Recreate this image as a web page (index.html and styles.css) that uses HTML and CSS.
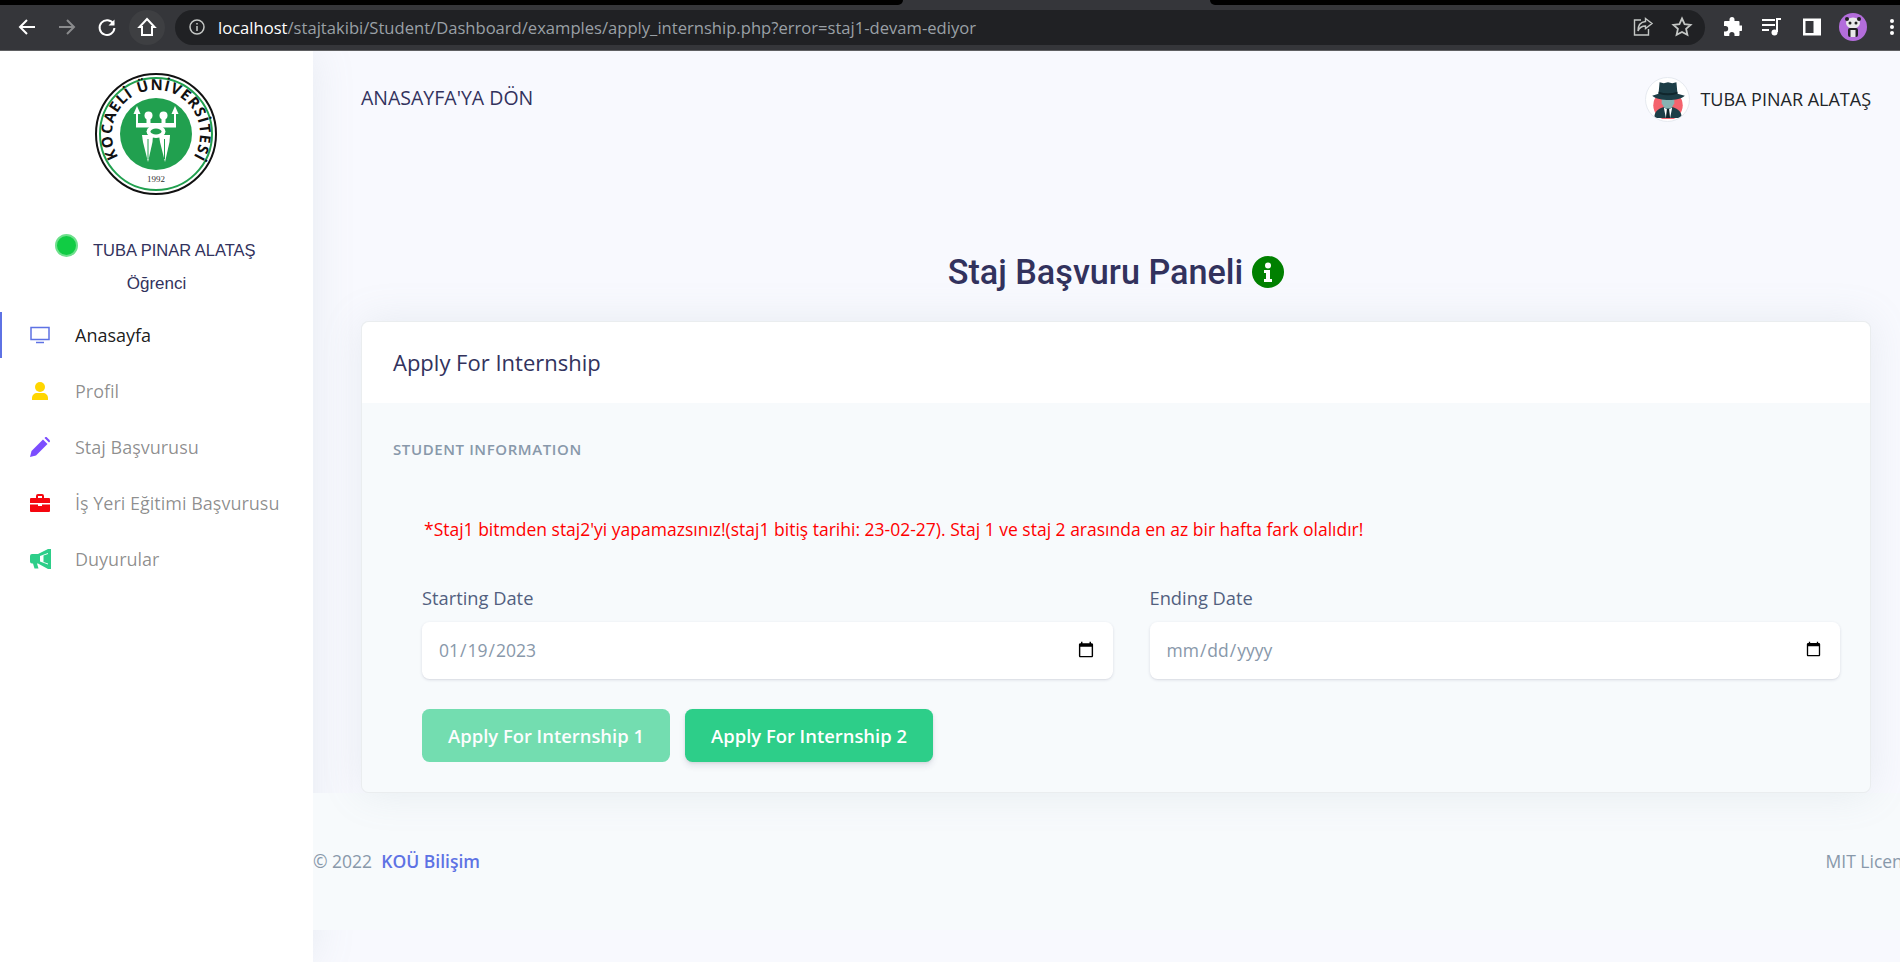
FILE: index.html
```html
<!DOCTYPE html>
<html lang="en">
<head>
    <meta charset="UTF-8">
    <meta name="viewport" content="width=device-width, initial-scale=1.0">
    <title>Staj Başvuru Paneli</title>
    <link rel="stylesheet" href="styles.css">
</head>
<body>
    <!-- browser chrome -->
    <div class="tab-strip">
        <div class="tab-black tab-left"></div>
        <div class="tab-active"></div>
        <div class="tab-black tab-right"></div>
    </div>
    <div class="toolbar">
        <div class="tool-btn">
            <svg width="22" height="22" viewBox="0 0 22 22" fill="none" stroke="#fff" stroke-width="2"><path d="M19 11H4M11 4l-7 7 7 7"/></svg>
        </div>
        <div class="tool-btn">
            <svg width="22" height="22" viewBox="0 0 22 22" fill="none" stroke="#8a8b8d" stroke-width="2"><path d="M3 11h15M11 4l7 7-7 7"/></svg>
        </div>
        <div class="tool-btn">
            <svg width="22" height="22" viewBox="0 0 22 22" fill="none" stroke="#fff" stroke-width="2"><path d="M17.500 8A7.400 7.400 0 1 0 18.400 12"/><path d="M18.500 3.500v6h-6z" fill="#fff" stroke="none"/></svg>
        </div>
        <div class="tool-btn tool-home">
            <svg width="22" height="22" viewBox="0 0 22 22" fill="none" stroke="#fff" stroke-width="2"><path d="M11 3l7.500 8H16v8H6v-8H3.500z"/></svg>
        </div>
        <div class="address-bar">
            <svg class="addr-info" width="18" height="18" viewBox="0 0 18 18" fill="none" stroke="#c4c7c5" stroke-width="1.500"><circle cx="9" cy="9" r="7"/><path d="M9 8v5M9 5v1.600"/></svg>
            <span class="url"><span class="url-host">localhost</span>/stajtakibi/Student/Dashboard/examples/apply_internship.php?error=staj1-devam-ediyor</span>
            <div class="addr-actions">
                <svg width="22" height="22" viewBox="0 0 22 22" fill="none" stroke="#c4c7c5" stroke-width="1.400"><path d="M9 4H2.500v15h14v-6"/><path d="M13.500 2.500l6.500 5-6.500 5V10c-4 0-6 1.500-7.500 5 0-5 2.500-9 7.500-9.500z"/></svg>
                <svg width="22" height="22" viewBox="0 0 22 22" fill="none" stroke="#c4c7c5" stroke-width="1.800"><path d="M11 2.500l2.600 5.600 6 .7-4.500 4.100 1.300 6L11 16l-5.400 2.900 1.300-6-4.500-4.100 6-.7z"/></svg>
            </div>
        </div>
        <div class="ext-icons">
            <svg width="20" height="20" viewBox="0 0 20 20" fill="#fff"><path d="M7.500 2.500a2.500 2.500 0 0 1 5 0V4h4a1 1 0 0 1 1 1v3.500H19a2.700 2.700 0 0 1 0 5.400h-1.500V18a1 1 0 0 1-1 1h-4v-1.500a2.600 2.600 0 0 0-5.200 0V19H3a1 1 0 0 1-1-1v-3.500h1.500a2.700 2.700 0 0 0 0-5.400H2V5a1 1 0 0 1 1-1h4.500z"/></svg>
            <svg width="20" height="20" viewBox="0 0 20 20" fill="none" stroke="#fff" stroke-width="2"><path d="M0 3h13M0 8h13M0 13h7"/><circle cx="12.500" cy="15.500" r="3" fill="#fff" stroke="none"/><path d="M15 15V2h4"/></svg>
            <svg width="20" height="20" viewBox="0 0 20 20"><rect x="1" y="1.500" width="18" height="17" fill="#fff"/><rect x="3.500" y="4" width="8" height="12" fill="#35363a"/></svg>
            <svg class="ext-profile" width="28" height="28" viewBox="0 0 28 28"><circle cx="14" cy="14" r="14" fill="#b36ddb"/><ellipse cx="14" cy="10" rx="7" ry="5.500" fill="#e9e9e9"/><circle cx="8" cy="6" r="2" fill="#222"/><circle cx="20" cy="6" r="2" fill="#222"/><circle cx="11" cy="10" r="1.500" fill="#222"/><circle cx="17" cy="10" r="1.500" fill="#222"/><rect x="9" y="15" width="10" height="9" rx="2" fill="#222"/><rect x="11.500" y="17" width="5" height="7" fill="#e9e9e9"/></svg>
            <svg class="ext-dots" width="6" height="18" viewBox="0 0 6 18" fill="#fff"><circle cx="3" cy="3" r="2"/><circle cx="3" cy="9" r="2"/><circle cx="3" cy="15" r="2"/></svg>
        </div>
    </div>
    <div class="page">
        <aside class="sidebar">
            <div class="logo-wrap">
                <svg class="logo" width="122" height="122" viewBox="0 0 122 122">
                    <defs>
                        <path id="logoArc" d="M23.500 84A44 44 0 1 1 98.500 84"/>
                    </defs>
                    <circle cx="61" cy="61" r="60" fill="#fff" stroke="#111" stroke-width="2"/>
                    <circle cx="61" cy="61" r="56" fill="none" stroke="#21a04f" stroke-width="2"/>
                    <text class="logo-text"><textPath href="#logoArc" startOffset="0" textLength="186" lengthAdjust="spacing">KOCAELİ ÜNİVERSİTESİ</textPath></text>
                    <circle cx="61" cy="61" r="36" fill="#21a04f"/>
                    <!-- emblem -->
                    <g fill="#fff">
                        <circle cx="53.500" cy="42.500" r="4"/>
                        <circle cx="68.500" cy="42.500" r="4"/>
                        <rect x="41" y="40" width="2" height="12"/>
                        <rect x="79" y="40" width="2" height="12"/>
                        <rect x="51.500" y="45" width="4" height="7"/>
                        <rect x="66.500" y="45" width="4" height="7"/>
                        <rect x="41" y="50" width="40" height="4.500"/>
                        <ellipse cx="61" cy="58.500" rx="9.500" ry="6.500"/>
                        <path d="M42 33l3.500 8h-7zM80 33l3.500 8h-7z"/>
                        <path d="M47 62h11l-.5 7-4.500 20-5-20z"/>
                        <path d="M64 62h11l-.5 7-4.500 20-5-20z"/>
                    </g>
                    <ellipse cx="61" cy="58.500" rx="5.500" ry="3" fill="#21a04f"/>
                    <path d="M53 66v20M69.500 66v20" stroke="#21a04f" stroke-width="1"/>
                    <text class="logo-year" x="61" y="109" text-anchor="middle">1992</text>
                </svg>
            </div>
            <div class="user-line">
                <span class="status-dot"></span>
                <span class="user-name">TUBA PINAR ALATAŞ</span>
            </div>
            <div class="user-role">Öğrenci</div>
            <ul class="nav-list">
                <li class="nav-item active">
                    <svg class="nav-icon" width="20" height="20" viewBox="0 0 20 20" fill="none" stroke="#5e72e4" stroke-width="1.500"><rect x="1" y="2.500" width="18" height="12"/><path d="M6 17.500h8"/></svg>
                    <span>Anasayfa</span>
                </li>
                <li class="nav-item">
                    <svg class="nav-icon" width="20" height="20" viewBox="0 0 20 20" fill="#ffd600"><circle cx="10" cy="6" r="5"/><path d="M2 19v-2c0-3 2.500-5 5-5h6c2.500 0 5 2 5 5v2z"/></svg>
                    <span>Profil</span>
                </li>
                <li class="nav-item">
                    <svg class="nav-icon" width="20" height="20" viewBox="0 0 20 20" fill="#7c4dff"><path d="M0 20l1.500-6L13 2.500l4.500 4.500L6 18.500z"/><path d="M14.500 1l1-1h1l3.500 3.500v1l-1 1z"/></svg>
                    <span>Staj Başvurusu</span>
                </li>
                <li class="nav-item">
                    <svg class="nav-icon" width="20" height="20" viewBox="0 0 20 20" fill="#f5060f"><path d="M6 5V3a2 2 0 0 1 2-2h4a2 2 0 0 1 2 2v2h-2V3H8v2z"/><path d="M1 5h18a1 1 0 0 1 1 1v4H0V6a1 1 0 0 1 1-1z"/><path d="M0 11.500h8V13h4v-1.500h8V18a1 1 0 0 1-1 1H1a1 1 0 0 1-1-1z"/></svg>
                    <span>İş Yeri Eğitimi Başvurusu</span>
                </li>
                <li class="nav-item">
                    <svg class="nav-icon nav-icon-wide" width="22" height="20" viewBox="0 0 22 20" fill="#2dce89"><path d="M0 7a2 2 0 0 1 2-2h6l10-5h3v20h-3L8 14.500H7l1.500 5H4.500L3 14.500H2a2 2 0 0 1-2-2z"/><path d="M18 4l-8 3v5.500l8 3z" fill="#fff"/><path d="M13.500 6.500l4.500-1.500v9.500l-4.500-1.500z"/></svg>
                    <span>Duyurular</span>
                </li>
            </ul>
        </aside>
        <main class="main">
            <nav class="topnav">
                <a class="back-link">ANASAYFA'YA DÖN</a>
                <div class="topnav-user">
                    <span class="avatar">
                        <svg width="40" height="40" viewBox="0 0 38 38">
                            <circle cx="19" cy="25" r="14" fill="#f4636d"/>
                            <path d="M6 37c0-7 5-10 13-11 8 1 13 4 13 11z" fill="#1d3e47"/>
                            <path d="M15 27l4 2 4-2-2 10h-4z" fill="#fff"/>
                            <path d="M18 28h2l1 9h-4z" fill="#10262c"/>
                            <path d="M13 16h12v7l-3 5h-6l-3-5z" fill="#86b3b3"/>
                            <path d="M11 3l4 1 4-1 4 1 4-1 1 11 7 2c-3 3-9 4-15 4S7 19 4 16l6-2z" fill="#1d3e47"/>
                            <path d="M10 12c6 2 12 2 18 0v2c-6 2-12 2-18 0z" fill="#10262c"/>
                        </svg>
                    </span>
                    <span class="topnav-name">TUBA PINAR ALATAŞ</span>
                </div>
            </nav>
            <section class="content">
                <h2 class="page-title">Staj Başvuru Paneli
                    <svg class="title-icon" width="32" height="32" viewBox="0 0 32 32"><circle cx="16" cy="16" r="16" fill="#008000"/><circle cx="16" cy="9.500" r="3" fill="#fff"/><path d="M12 14h6v9h2v3h-8v-3h2v-6h-2z" fill="#fff"/></svg>
                </h2>
                <div class="card">
                    <div class="card-header">Apply For Internship</div>
                    <form class="card-body">
                        <h6 class="section-title">Student information</h6>
                        <p class="form-error">*Staj1 bitmden staj2'yi yapamazsınız!(staj1 bitiş tarihi: 23-02-27). Staj 1 ve staj 2 arasında en az bir hafta fark olalıdır!</p>
                        <div class="form-row">
                            <div class="form-group">
                                <label for="startDate">Starting Date</label>
                                <input type="date" id="startDate" class="form-control" value="2023-01-19">
                            </div>
                            <div class="form-group">
                                <label for="endDate">Ending Date</label>
                                <input type="date" id="endDate" class="form-control">
                            </div>
                        </div>
                        <div class="form-buttons">
                            <button type="button" class="btn btn-faded">Apply For Internship 1</button>
                            <button type="button" class="btn">Apply For Internship 2</button>
                        </div>
                    </form>
                </div>
            </section>
            <footer class="footer">
                <div class="footer-row">
                    <span>© 2022 &nbsp;<a class="footer-link">KOÜ Bilişim</a></span>
                    <span>MIT License</span>
                </div>
            </footer>
        </main>
    </div>
</body>
</html>
```

FILE: styles.css
```css
* {
    box-sizing: border-box;
}

html, body {
    margin: 0;
    height: 100%;
    overflow: hidden;
}

body {
    font-family: "Open Sans", sans-serif;
    font-size: 17.5px;
    background-color: #f8f9fe;
    color: #525f7f;
}

/* browser chrome */
.tab-strip {
    display: flex;
    height: 5px;
    background: #35363a;
}

.tab-black {
    background: #000;
}

.tab-left {
    width: 903px;
    border-bottom-right-radius: 5px;
}

.tab-active {
    width: 307px;
}

.tab-right {
    flex: 1;
    border-bottom-left-radius: 5px;
}

.toolbar {
    display: flex;
    align-items: center;
    height: 46px;
    padding: 0 0 1px 7px;
    background: #35363a;
    border-bottom: 1px solid #5f6062;
}

.tool-btn {
    display: flex;
    align-items: center;
    justify-content: center;
    width: 40px;
    height: 35px;
    border-radius: 50%;
}

.tool-home {
    background: #3e3f42;
    width: 36px;
    margin-left: 2px;
}

.address-bar {
    flex: none;
    display: flex;
    align-items: center;
    width: 1530px;
    height: 35px;
    margin-left: 10px;
    padding: 0 12px 0 13px;
    border-radius: 18px;
    background: #202124;
}

.addr-info {
    margin-right: 12px;
}

.url {
    font-size: 16.600px;
    color: #9aa0a6;
    white-space: nowrap;
}

.url-host {
    color: #fff;
}

.addr-actions {
    display: flex;
    gap: 17px;
    margin-left: auto;
}

.ext-icons {
    flex: none;
    display: flex;
    align-items: center;
    gap: 20px;
    margin-left: 17px;
}

.ext-profile {
    margin-left: -3px;
}

.ext-dots {
    margin-left: 2px;
}

/* layout */
.page {
    display: flex;
    height: 911px;
    overflow: hidden;
}

.sidebar {
    position: relative;
    flex: 0 0 313px;
    padding-top: 22px;
    background: #fff;
    box-shadow: 0 0 40px rgba(136, 152, 170, 0.15);
}

.logo-wrap {
    display: flex;
    justify-content: center;
    padding-right: 1px;
}

.logo-text {
    font-family: "Open Sans", sans-serif;
    font-size: 15px;
    font-weight: 700;
    fill: #111;
}

.logo-year {
    font-family: "Liberation Serif", serif;
    font-size: 9px;
    fill: #333;
}

.user-line {
    display: flex;
    align-items: center;
    margin-top: 43px;
    padding-left: 55px;
    height: 24px;
}

.status-dot {
    width: 23px;
    height: 23px;
    border-radius: 50%;
    background: #11cc44;
    border: 2px solid #6fe08d;
    margin: 0 15px -1px 0;
    position: relative;
    top: -5px;
}

.user-name, .user-role {
    font-family: "Liberation Sans", sans-serif;
    color: #32325d;
}

.user-name {
    font-size: 16.500px;
}

.user-role {
    font-size: 17px;
    text-align: center;
    margin-top: 12px;
    line-height: 20px;
}

.nav-list {
    list-style: none;
    margin: 18px 0 0;
    padding: 0;
}

.nav-item {
    display: flex;
    align-items: center;
    gap: 25px;
    height: 46px;
    margin-bottom: 10px;
    padding-left: 30px;
    font-size: 18px;
    color: rgba(0, 0, 0, 0.45);
}

.nav-item.active {
    color: rgba(0, 0, 0, 0.9);
    border-left: 2px solid #5e72e4;
    padding-left: 28px;
}

.nav-icon {
    flex: none;
}

.nav-icon-wide {
    margin-right: -2px;
}

/* main */
.main {
    flex: 1;
    position: relative;
    min-width: 0;
}

.topnav {
    display: flex;
    justify-content: space-between;
    align-items: center;
    height: 96px;
    padding: 0 29px 0 48px;
}

.back-link {
    color: #32325d;
    font-size: 19.500px;
    margin-top: -3px;
}

.topnav-user {
    display: flex;
    align-items: center;
    gap: 10px;
}

.avatar {
    display: flex;
    align-items: center;
    justify-content: center;
    width: 45px;
    height: 45px;
    border-radius: 50%;
    background: #fff;
    border: 1px solid #e6eaf0;
    overflow: hidden;
}

.topnav-name {
    font-size: 18px;
    color: #212529;
}

.content {
    position: relative;
    z-index: 2;
    padding: 0 29px 0 48px;
}

.page-title {
    display: flex;
    align-items: center;
    justify-content: center;
    gap: 9px;
    margin: 0;
    height: 174px;
    padding: 99px 0 23px 0;
    font-family: "Roboto", sans-serif;
    font-size: 34.200px;
    font-weight: 500;
    color: #32325d;
}

.title-icon {
    flex: none;
}

.card {
    height: 472px;
    border-radius: 7.500px;
    background: #f7fafc;
    border: 1px solid rgba(0, 0, 0, 0.05);
    box-shadow: 0 0 40px rgba(136, 152, 170, 0.15);
}

.card-header {
    display: flex;
    align-items: center;
    height: 81px;
    padding: 0 0 2px 31px;
    background: #fff;
    border-radius: 7.500px 7.500px 0 0;
    font-size: 22px;
    font-weight: 500;
    color: #32325d;
}

.card-body {
    display: block;
    padding: 36px 30px 0 31px;
}

.section-title {
    margin: 0;
    font-size: 15px;
    font-weight: 600;
    line-height: 20px;
    letter-spacing: 0.6px;
    text-transform: uppercase;
    color: #8898aa;
}

.form-error {
    margin: 58px 0 0 31px;
    color: #f00;
    line-height: 24px;
}

.form-row {
    display: flex;
    gap: 37px;
    margin: 45px 0 0 29px;
}

.form-group {
    flex: 1;
}

.form-group label {
    display: block;
    margin-bottom: 12px;
    font-size: 18.300px;
    font-weight: 500;
    line-height: 24px;
}

.form-control {
    display: block;
    width: 100%;
    height: 57px;
    padding: 0 16px 2px;
    border: none;
    border-radius: 7.500px;
    background: #fff;
    font-family: inherit;
    font-size: 17.500px;
    color: #8898aa;
    box-shadow: 0 1px 3px rgba(50, 50, 93, 0.15), 0 1px 0 rgba(0, 0, 0, 0.02);
}

.form-buttons {
    display: flex;
    gap: 15px;
    margin: 30px 0 0 29px;
}

.btn {
    width: 248px;
    height: 53px;
    border: none;
    border-radius: 7.500px;
    background-color: #2dce89;
    color: #fff;
    font-family: inherit;
    font-size: 18.400px;
    font-weight: 600;
    box-shadow: 0 4px 6px rgba(50, 50, 93, 0.11), 0 1px 3px rgba(0, 0, 0, 0.08);
    cursor: pointer;
}

.btn-faded {
    opacity: 0.65;
    box-shadow: none;
}

.footer {
    position: relative;
    z-index: 1;
    height: 137px;
    background: #f7fafc;
    color: #8898aa;
}

.footer-row {
    display: flex;
    justify-content: space-between;
    align-items: center;
    width: 1608px;
    height: 135px;
}

.footer-link {
    color: #5e72e4;
    font-weight: 600;
}
```
